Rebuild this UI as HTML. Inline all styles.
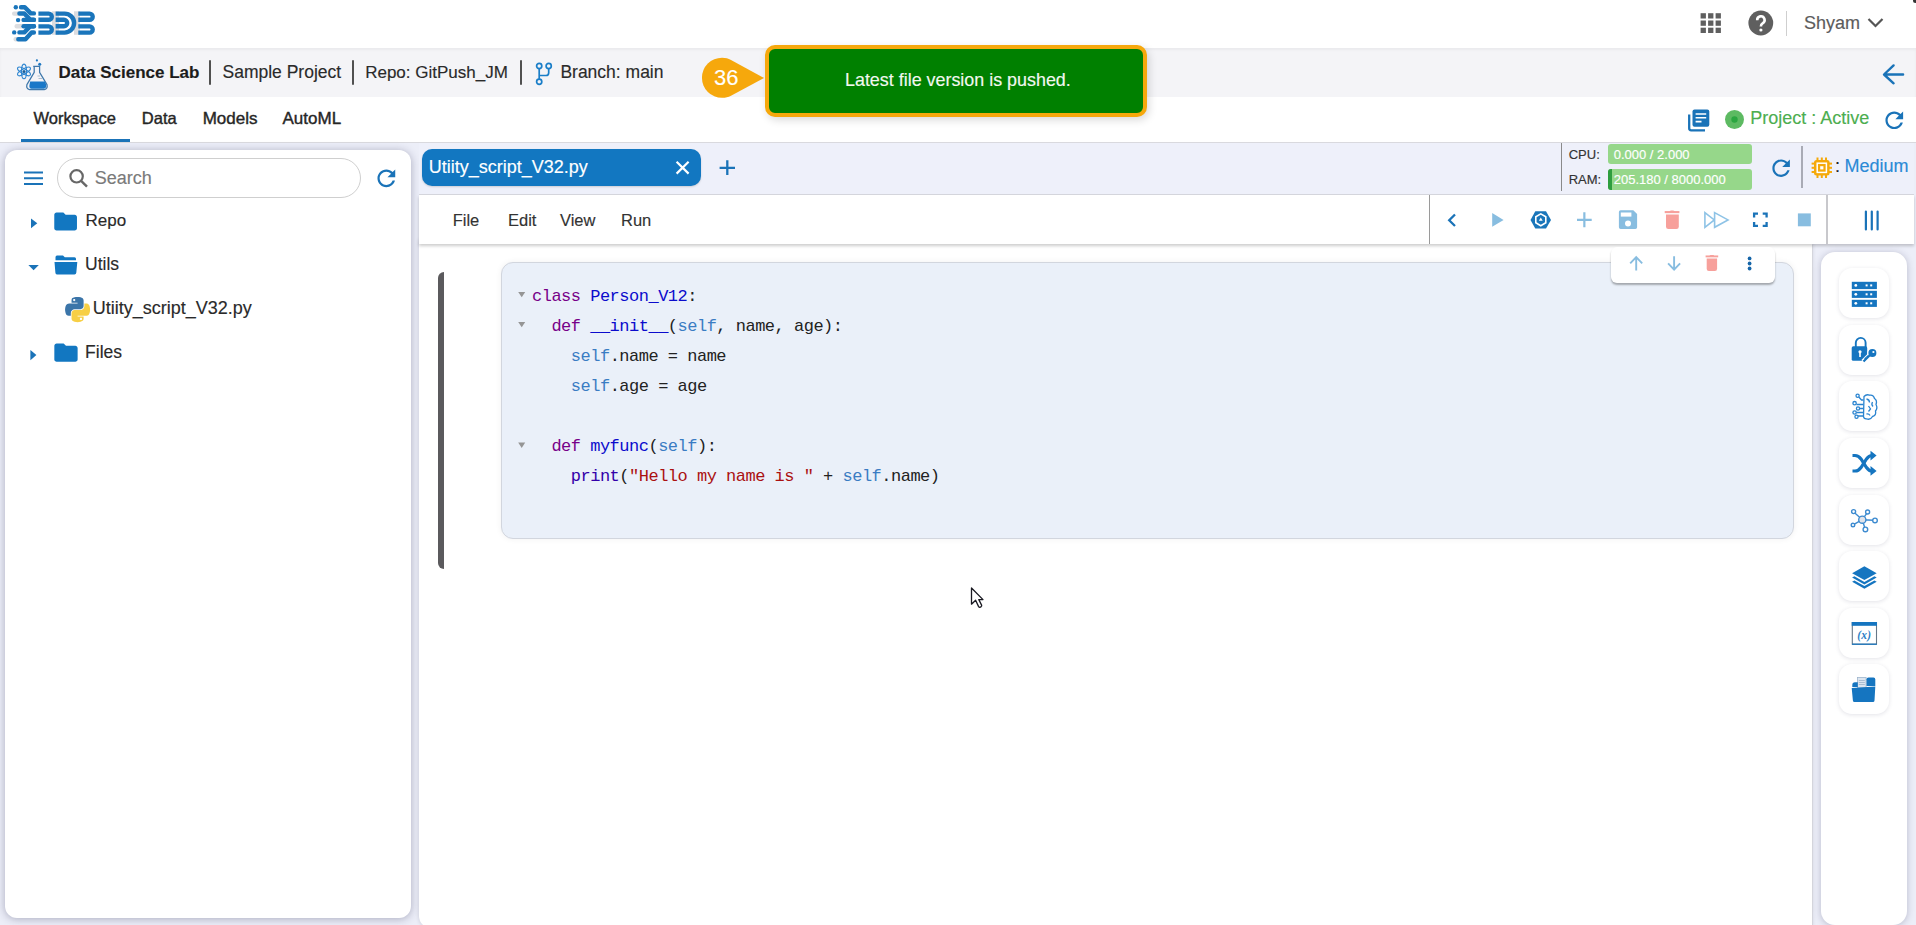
<!DOCTYPE html>
<html><head><meta charset="utf-8">
<style>
*{box-sizing:border-box;margin:0;padding:0}
html,body{width:1916px;height:925px;overflow:hidden}
body{position:relative;background:#eceef8;font-family:"Liberation Sans",sans-serif;color:#222}
.a{position:absolute}
.t{position:absolute;white-space:nowrap;-webkit-text-stroke:0.15px currentColor}
.tb{-webkit-text-stroke:0.4px currentColor}
svg{position:absolute;overflow:visible}
</style></head>
<body>
<!-- header -->
<div class="a" style="left:0;top:0;width:1916px;height:48px;background:#fff"></div>
<div class="a" style="left:0;top:48px;width:1916px;height:49px;background:#f4f4f7;box-shadow:inset 0 2px 3px rgba(0,0,0,0.045)"></div>
<div class="a" style="left:0;top:97px;width:1916px;height:45px;background:#fff"></div>
<div class="a" style="left:0;top:142px;width:1916px;height:1px;background:#d9d9de"></div>

<!-- left panel -->
<div class="a" style="left:5px;top:150px;width:406px;height:768px;background:#fff;border-radius:12px;box-shadow:0 1px 8px rgba(40,40,80,0.34)"></div>

<!-- editor strip -->
<div class="a" style="left:419px;top:143px;width:1495px;height:51px;background:#eef0fa"></div>
<div class="a" style="left:419px;top:194px;width:1495px;height:1px;background:#d6d7de"></div>
<!-- editor content -->
<div class="a" style="left:419px;top:240px;width:1393px;height:688px;background:#fff;border-radius:0 0 0 12px;box-shadow:0 0 4px rgba(0,0,40,0.16)"></div>
<div class="a" style="left:1812px;top:245px;width:1px;height:680px;background:#d4d5dc"></div>
<div class="a" style="left:419px;top:195px;width:1495px;height:49px;background:#fff;box-shadow:0 2px 3px rgba(0,0,0,0.2)"></div>
<!-- right panel -->
<div class="a" style="left:1821px;top:252px;width:86px;height:673px;background:#fff;border-radius:14px;box-shadow:0 1px 7px rgba(50,50,90,0.28)"></div>


<!-- header texts -->
<div class="t" style="left:1804px;top:13.7px;font-size:18px;line-height:18px;color:#5c5c5c">Shyam</div>
<div class="t" style="left:58.6px;top:63.8px;font-size:17px;line-height:17px;font-weight:bold;color:#1c1c1c">Data Science Lab</div>
<div class="a" style="left:209px;top:60px;width:2px;height:25px;background:#505050;border-radius:1px"></div>
<div class="t" style="left:222.5px;top:64.4px;font-size:17.5px;line-height:17.5px;color:#2a2a2a">Sample Project</div>
<div class="a" style="left:352px;top:60px;width:2px;height:25px;background:#505050;border-radius:1px"></div>
<div class="t" style="left:365.2px;top:63.8px;font-size:17px;line-height:17px;color:#2a2a2a">Repo: GitPush_JM</div>
<div class="a" style="left:520px;top:60px;width:2px;height:25px;background:#505050;border-radius:1px"></div>
<div class="t" style="left:560.4px;top:64.4px;font-size:17.5px;line-height:17.5px;color:#2a2a2a">Branch: main</div>
<!-- tabs -->
<div class="t tb" style="left:33.6px;top:110px;font-size:16.5px;line-height:16.5px;color:#262626">Workspace</div>
<div class="t tb" style="left:141.8px;top:110px;font-size:16.5px;line-height:16.5px;color:#262626">Data</div>
<div class="t tb" style="left:202.7px;top:109.6px;font-size:17px;line-height:17px;color:#262626">Models</div>
<div class="t tb" style="left:282.5px;top:109.6px;font-size:17px;line-height:17px;color:#262626">AutoML</div>
<div class="a" style="left:21px;top:139px;width:109px;height:3px;background:#1a73b8"></div>
<div class="t" style="left:1750.2px;top:109.2px;font-size:18px;line-height:18px;color:#4cae4f">Project : Active</div>
<!-- left tree -->
<div class="a" style="left:57px;top:158px;width:304px;height:40px;border:1px solid #cfcfcf;border-radius:20px"></div>
<div class="t" style="left:94.7px;top:168.9px;font-size:18px;line-height:18px;color:#7a7a7a">Search</div>
<div class="t" style="left:85.5px;top:212.1px;font-size:17px;line-height:17px;color:#2a2a2a">Repo</div>
<div class="t" style="left:85.1px;top:256px;font-size:17.5px;line-height:17.5px;color:#2a2a2a">Utils</div>
<div class="t" style="left:92.8px;top:299.2px;font-size:18px;line-height:18px;color:#2a2a2a">Utiity_script_V32.py</div>
<div class="t" style="left:85.1px;top:343.5px;font-size:17.5px;line-height:17.5px;color:#2a2a2a">Files</div>
<!-- editor tab -->
<div class="a" style="left:422px;top:149px;width:279px;height:37px;background:#1277c1;border-radius:10px;box-shadow:0 1px 2px rgba(0,0,0,0.15)"></div>
<div class="t" style="left:428.7px;top:158.1px;font-size:18px;line-height:18px;color:#fff">Utiity_script_V32.py</div>
<!-- menu -->
<div class="t" style="left:452.7px;top:212.3px;font-size:16.5px;line-height:16.5px;color:#333">File</div>
<div class="t" style="left:508px;top:212.3px;font-size:16.5px;line-height:16.5px;color:#333">Edit</div>
<div class="t" style="left:560px;top:212.3px;font-size:16.5px;line-height:16.5px;color:#333">View</div>
<div class="t" style="left:621px;top:212.3px;font-size:16.5px;line-height:16.5px;color:#333">Run</div>
<div class="a" style="left:1429px;top:195px;width:1px;height:49px;background:#9a9a9a"></div>
<div class="a" style="left:1826px;top:195px;width:2px;height:49px;background:#c8c8cc"></div>
<!-- CPU RAM -->
<div class="a" style="left:1561px;top:143px;width:1px;height:48px;background:#8a8a8a"></div>
<div class="t" style="left:1568.7px;top:148px;font-size:13px;line-height:13px;color:#333">CPU:</div>
<div class="t" style="left:1568.7px;top:172.8px;font-size:13px;line-height:13px;color:#333">RAM:</div>
<div class="a" style="left:1608px;top:144px;width:144px;height:20px;background:#96d78a;border-radius:3px"></div>
<div class="a" style="left:1608px;top:169px;width:144px;height:21px;background:#96d78a;border-radius:3px;overflow:hidden"><div class="a" style="left:0;top:0;width:4px;height:21px;background:#2e9e3e"></div></div>
<div class="t" style="left:1613.7px;top:147.9px;font-size:13px;line-height:13px;color:#fff">0.000 / 2.000</div>
<div class="t" style="left:1613.7px;top:172.8px;font-size:13px;line-height:13px;color:#fff">205.180 / 8000.000</div>
<div class="a" style="left:1801px;top:146px;width:2px;height:42px;background:#a9abb5"></div>
<div class="t" style="left:1835px;top:157px;font-size:18px;line-height:18px;color:#222">:</div>
<div class="t" style="left:1844.5px;top:157px;font-size:18px;line-height:18px;color:#2a8ad6">Medium</div>
<!-- code cell -->
<div class="a" style="left:438px;top:272px;width:6px;height:297px;background:#5b5a5d;border-radius:6px 0 0 6px"></div>
<div class="a" style="left:501px;top:262px;width:1293px;height:277px;background:#eaf0f9;border:1px solid #d2d6de;border-radius:12px;box-shadow:0 0 6px rgba(0,0,0,0.06)"></div>
<pre class="a" style="left:532px;top:281.5px;font-family:'Liberation Mono',monospace;font-size:17px;letter-spacing:-0.5px;line-height:30.1px;color:#222"><span style="color:#708">class</span> <span style="color:#0b0bcc">Person_V12</span>:
  <span style="color:#708">def</span> <span style="color:#0b0bcc">__init__</span>(<span style="color:#3a7cc3">self</span>, name, age):
    <span style="color:#3a7cc3">self</span>.name = name
    <span style="color:#3a7cc3">self</span>.age = age

  <span style="color:#708">def</span> <span style="color:#0b0bcc">myfunc</span>(<span style="color:#3a7cc3">self</span>):
    <span style="color:#30a">print</span>(<span style="color:#a11">"Hello my name is "</span> + <span style="color:#3a7cc3">self</span>.name)</pre>
<!-- cell toolbar -->
<div class="a" style="left:1611px;top:247px;width:164px;height:36px;background:#fff;border-radius:6px;box-shadow:0 2px 2px rgba(0,0,0,0.3)"></div>

<!-- ICONS header -->
<svg style="left:0;top:0" width="100" height="48" viewBox="0 0 100 48">
 <g fill="#dcdde0">
  <rect x="12" y="11.4" width="8" height="4.4" rx="2"/><rect x="14.5" y="24" width="9" height="4.4" rx="2"/><rect x="13.5" y="37" width="6" height="4.4" rx="2"/>
  <rect x="52" y="11.3" width="7" height="23.5"/><rect x="74" y="11.3" width="6" height="23.5"/>
 </g>
 <g fill="none" stroke="#1a75bb" stroke-width="4.4" stroke-linecap="round" stroke-linejoin="round">
  <path d="M21,7.3 H24.8 L30.8,13.4 H33.9"/>
  <path d="M19.4,13.5 H24.3 L30.3,19.8 H33.9"/>
  <path d="M23.6,19.9 H33.9"/>
  <path d="M23.6,26.2 H33.9"/>
  <path d="M19.4,32.4 H24.3 L30.3,26.3 H33.9"/>
  <path d="M18.3,39.2 H25.5 L31.6,32.5 H33.9"/>
 </g>
 <g fill="#1a75bb"><circle cx="15.8" cy="7.3" r="2.2"/><circle cx="18.1" cy="20.1" r="2.2"/><circle cx="14.2" cy="32.4" r="2.2"/></g>
 <g fill="none" stroke="#1a75bb" stroke-width="4.4" stroke-linecap="butt">
  <path d="M38.4,13.6 H48.7 A3.1 3.1 0 0 1 48.7,19.8 H38.4"/>
  <path d="M38.4,26.4 H48.7 A3.1 3.1 0 0 1 48.7,32.6 H38.4"/>
  <path d="M55.6,13.6 H64.6 A9.5 9.5 0 0 1 64.6,32.6 H55.6"/>
  <path d="M55.6,19.8 H64 A3.2 3.2 0 0 1 64,26.2 H55.6"/>
  <path d="M78.3,13.6 H89.6 A3.1 3.1 0 0 1 89.6,19.8 H78.3"/>
  <path d="M78.3,26.4 H89.6 A3.1 3.1 0 0 1 89.6,32.6 H78.3"/>
 </g>
</svg>
<svg style="left:1700px;top:13px" width="22" height="21" viewBox="0 0 22 21"><g fill="#5f5f5f">
 <rect x="0.6" y="0.2" width="5.3" height="5.3"/><rect x="8.1" y="0.2" width="5.3" height="5.3"/><rect x="15.6" y="0.2" width="5.3" height="5.3"/>
 <rect x="0.6" y="7.5" width="5.3" height="5.3"/><rect x="8.1" y="7.5" width="5.3" height="5.3"/><rect x="15.6" y="7.5" width="5.3" height="5.3"/>
 <rect x="0.6" y="14.7" width="5.3" height="5.3"/><rect x="8.1" y="14.7" width="5.3" height="5.3"/><rect x="15.6" y="14.7" width="5.3" height="5.3"/>
</g></svg>
<svg style="left:1748px;top:10px" width="26" height="26" viewBox="0 0 26 26">
 <circle cx="12.8" cy="13" r="12.4" fill="#5f5f5f"/>
 <path d="M9.2,10.2 A3.7 3.7 0 1 1 14.6,13.3 C13.4,14 12.9,14.6 12.9,16.4" fill="none" stroke="#fff" stroke-width="2.6" stroke-linecap="butt"/>
 <circle cx="12.9" cy="20" r="1.6" fill="#fff"/>
</svg>
<div class="a" style="left:1786px;top:11px;width:1px;height:25px;background:#cfcfcf"></div>
<svg style="left:1866px;top:16px" width="20" height="14" viewBox="0 0 20 14"><path d="M2.5,3 L9.5,10 L16.5,3" fill="none" stroke="#555" stroke-width="2.2"/></svg>
<!-- DS lab icon -->
<svg style="left:12px;top:55px" width="40" height="40" viewBox="0 0 40 40">
 <g fill="none" stroke="#2f86d0" stroke-width="1.15">
  <ellipse cx="12" cy="16.4" rx="2.5" ry="7.3"/>
  <ellipse cx="12" cy="16.4" rx="2.5" ry="7.3" transform="rotate(60 12 16.4)"/>
  <ellipse cx="12" cy="16.4" rx="2.5" ry="7.3" transform="rotate(-60 12 16.4)"/>
 </g>
 <circle cx="12" cy="16.4" r="1.5" fill="#1a5f99"/>
 <path d="M21.2,11.3 H28.2 M22.2,11.3 V17.4 L14.9,29.6 Q14,33.9 17.6,34.6 H32.3 Q35.9,33.9 35,29.6 L27.6,17.4 V11.3" fill="none" stroke="#3f78ab" stroke-width="1.25" stroke-linejoin="round"/>
 <path d="M18.2,26.6 H33 L34.2,29.8 Q34.7,33.3 31.8,33.7 H19.5 Q17,33.4 17.4,30.2 Z" fill="#1a78c8"/>
 <path d="M25.5,21 H28 M26.5,23.5 H30" stroke="#9bb0c4" stroke-width="0.8"/>
 <circle cx="24.9" cy="5.4" r="1.1" fill="#1e78c2"/><circle cx="27.7" cy="9.3" r="1.5" fill="#1e78c2"/>
</svg>
<!-- branch -->
<svg style="left:528px;top:55px" width="32" height="40" viewBox="0 0 32 40"><g fill="none" stroke="#1a7ec8" stroke-width="1.7">
 <circle cx="11.2" cy="11" r="2.6"/><circle cx="20.7" cy="11" r="2.6"/><circle cx="11.2" cy="26.8" r="2.6"/>
 <path d="M11.2,13.6 V24.2 M20.7,13.6 V17.7 Q20.7,20.5 18,20.5 H11.2"/>
</g></svg>
<!-- back arrow -->
<svg style="left:1870px;top:55px" width="46" height="40" viewBox="0 0 46 40"><path d="M23.6,10.4 L14,19.5 L23.6,28.3 M14.3,19.5 H33.1" fill="none" stroke="#1a73b8" stroke-width="2.4" stroke-linecap="round" stroke-linejoin="round"/></svg>
<!-- badge 36 -->
<svg style="left:700px;top:55px" width="70" height="46" viewBox="0 0 70 46">
 <path d="M22,2.7 C26,2.7 28,3.5 31,5 L64,22.9 L31,40.8 C28,42.3 26,42.8 22,42.8 A20 20 0 0 1 22,2.7 Z" fill="#f6a80c"/>
</svg>
<div class="t" style="left:714px;top:67.2px;font-size:22px;line-height:22px;color:#fff">36</div>
<!-- ICONS rest -->
<svg style="left:1880.56px;top:107.27px" width="26.55" height="26.55" viewBox="0 0 24 24"><path d="M17.65 6.35C16.2 4.9 14.21 4 12 4c-4.42 0-7.99 3.58-7.99 8s3.57 8 7.99 8c3.73 0 6.84-2.55 7.73-6h-2.08c-.82 2.33-3.04 4-5.65 4-3.31 0-6-2.69-6-6s2.69-6 6-6c1.66 0 3.14.69 4.22 1.78L13 11h7V4l-2.35 2.35z" fill="#1a73b8"/></svg>
<svg style="left:372.84px;top:165.45px" width="26.70" height="26.70" viewBox="0 0 24 24"><path d="M17.65 6.35C16.2 4.9 14.21 4 12 4c-4.42 0-7.99 3.58-7.99 8s3.57 8 7.99 8c3.73 0 6.84-2.55 7.73-6h-2.08c-.82 2.33-3.04 4-5.65 4-3.31 0-6-2.69-6-6s2.69-6 6-6c1.66 0 3.14.69 4.22 1.78L13 11h7V4l-2.35 2.35z" fill="#1a73b8"/></svg>
<svg style="left:1767.81px;top:154.72px" width="26.25" height="26.25" viewBox="0 0 24 24"><path d="M17.65 6.35C16.2 4.9 14.21 4 12 4c-4.42 0-7.99 3.58-7.99 8s3.57 8 7.99 8c3.73 0 6.84-2.55 7.73-6h-2.08c-.82 2.33-3.04 4-5.65 4-3.31 0-6-2.69-6-6s2.69-6 6-6c1.66 0 3.14.69 4.22 1.78L13 11h7V4l-2.35 2.35z" fill="#1a73b8"/></svg>
<svg style="left:1686px;top:108px" width="26" height="26" viewBox="0 0 26 26">
 <path d="M3.2,6.5 V20.3 Q3.2,22.3 5.2,22.3 H19" fill="none" stroke="#1a73b8" stroke-width="2.3"/>
 <rect x="6.5" y="1.6" width="16.8" height="17.2" rx="2" fill="#1a73b8"/>
 <g stroke="#fff" stroke-width="1.6"><path d="M9.6,6 H20.2 M9.6,9.8 H20.2 M9.6,13.6 H15.5"/></g>
</svg>
<svg style="left:1724px;top:109px" width="22" height="22" viewBox="0 0 22 22"><circle cx="10.5" cy="10.5" r="9.5" fill="#5dba62"/><circle cx="10.5" cy="10.5" r="3.2" fill="#2ba640"/></svg>
<svg style="left:24px;top:171px" width="20" height="16" viewBox="0 0 20 16"><g stroke="#1a73b8" stroke-width="2"><path d="M0,1.5 H19 M0,7.3 H19 M0,13.1 H19"/></g></svg>
<svg style="left:68px;top:168px" width="22" height="22" viewBox="0 0 22 22"><circle cx="8.6" cy="8.3" r="6.2" fill="none" stroke="#676767" stroke-width="2.2"/><path d="M13.1,12.8 L19,18.6" stroke="#676767" stroke-width="2.4"/></svg>
<svg style="left:0;top:0" width="420" height="380" viewBox="0 0 420 380"><g fill="#1a73b8">
 <path d="M31,218.4 L37.3,223.3 L31,228.2 Z"/>
 <path d="M28.4,265 L38.8,265 L33.6,270.2 Z"/>
 <path d="M30.4,349.9 L36.4,355 L30.4,360.2 Z"/>
</g></svg>
<svg style="left:52.33px;top:207.67px" width="27.24" height="27.15" viewBox="0 0 24 24" preserveAspectRatio="none"><path d="M10 4H4c-1.1 0-1.99.9-1.99 2L2 18c0 1.1.9 2 2 2h16c1.1 0 2-.9 2-2V8c0-1.1-.9-2-2-2h-8l-2-2z" fill="#1277c1"/></svg>
<svg style="left:52.07px;top:339.45px" width="27.96" height="27.30" viewBox="0 0 24 24" preserveAspectRatio="none"><path d="M10 4H4c-1.1 0-1.99.9-1.99 2L2 18c0 1.1.9 2 2 2h16c1.1 0 2-.9 2-2V8c0-1.1-.9-2-2-2h-8l-2-2z" fill="#1277c1"/></svg>
<svg style="left:54px;top:255px" width="24" height="20" viewBox="0 0 24 20">
 <path d="M1.5,2.2 Q1.5,0.6 3,0.6 H9 L10.8,2.3 H20.5 Q22,2.3 22,3.8 V5.2 H1.5 Z" fill="#1277c1"/>
 <path d="M0.5,7 H23.3 L22.3,17.8 Q22.1,19.5 20.5,19.5 H3 Q1.5,19.5 1.4,17.8 Z" fill="#1277c1"/>
</svg>
<svg style="left:65px;top:296.5px" width="25" height="25" viewBox="0 0 110 110">
 <path d="M54.9,0.3 C50.3,0.3 45.9,0.7 42.1,1.4 C30.8,3.4 28.8,7.5 28.8,15.2 V25.3 H55.3 V28.7 H28.8 H18.9 C11.1,28.7 4.4,33.3 2.3,42.1 C-0.2,52.1 -0.3,58.4 2.3,68.8 C4.2,76.6 8.6,82.1 16.3,82.1 H25.6 V69.9 C25.6,61.2 33.1,53.4 42.1,53.4 H68.6 C76,53.4 81.9,47.3 81.9,39.9 V15.2 C81.9,8.1 75.9,2.7 68.6,1.4 C64,0.7 59.3,0.3 54.9,0.3 Z M40.5,8.5 C43.3,8.5 45.5,10.8 45.5,13.6 C45.5,16.4 43.3,18.6 40.5,18.6 C37.8,18.6 35.5,16.4 35.5,13.6 C35.5,10.8 37.8,8.5 40.5,8.5 Z" fill="#3b75a9"/>
 <path d="M85.2,28.7 V40.6 C85.2,49.8 77.4,57.6 68.6,57.6 H42.1 C34.8,57.6 28.8,63.8 28.8,71.1 V95.9 C28.8,103 34.9,107.1 42.1,109.2 C50.6,111.7 58.8,112.2 68.6,109.2 C75.2,107.3 81.9,103.5 81.9,95.9 V86 H55.3 V82.7 H81.9 H95.2 C102.9,82.7 105.8,77.3 108.5,69.2 C111.2,60.9 111.1,52.9 108.5,42.3 C106.6,34.6 102.9,28.7 95.2,28.7 Z M70.3,91.6 C73.1,91.6 75.3,93.8 75.3,96.6 C75.3,99.4 73.1,101.7 70.3,101.7 C67.6,101.7 65.3,99.4 65.3,96.6 C65.3,93.8 67.6,91.6 70.3,91.6 Z" fill="#f7cf45"/>
</svg>
<svg style="left:674px;top:159px" width="18" height="18" viewBox="0 0 18 18"><path d="M2.6,2.8 L14.6,14.6 M14.6,2.8 L2.6,14.6" stroke="#fff" stroke-width="2.2"/></svg>
<svg style="left:718px;top:159px" width="19" height="18" viewBox="0 0 19 18"><path d="M1.6,8.8 H17 M9.3,1.2 V16.1" stroke="#1a73b8" stroke-width="2.3"/></svg>
<svg style="left:1440px;top:205px" width="380" height="30" viewBox="1440 205 380 30">
 <path d="M1455,214.5 L1449.2,220.3 L1455,226" fill="none" stroke="#1a73b8" stroke-width="2.3"/>
 <path d="M1492.2,213 L1503.6,219.9 L1492.2,226.8 Z" fill="#88bde0"/>
 <path d="M1535.3,211.3 H1546 L1551,219.9 L1546,228.5 H1535.3 L1530.5,219.9 Z" fill="#1a76ba"/>
 <path d="M1540.8,212.9 L1546.6,216.3 V223.3 L1540.8,226.7 L1535,223.3 V216.3 Z" fill="#fff"/>
 <path d="M1540.8,214.8 L1545,217.3 V222.3 L1540.8,224.8 L1536.6,222.3 V217.3 Z" fill="#1a76ba"/>
 <path d="M1540.8,217.4 L1542.7,220.8 H1538.9 Z" fill="#fff"/>
 <path d="M1577,219.8 H1591.7 M1584.35,212.2 V227.2" stroke="#88bde0" stroke-width="2.2"/>
 <path d="M1620.3,210.3 H1633.3 L1637.1,214.1 V227.3 Q1637.1,229.1 1635.3,229.1 H1620.7 Q1618.9,229.1 1618.9,227.3 V212.1 Q1618.9,210.3 1620.7,210.3 Z" fill="#88bde0"/>
 <rect x="1620.8" y="212.5" width="10.6" height="4.1" fill="#fff"/>
 <circle cx="1628" cy="223.6" r="3" fill="#fff"/>
 <path d="M1664.7,212.1 H1679.4" stroke="#f7a09b" stroke-width="2.1"/>
 <path d="M1669.3,212 Q1669.3,210.4 1671,210.4 H1673.2 Q1674.8,210.4 1674.8,212 Z" fill="#f7a09b"/>
 <path d="M1666,214.4 H1678.8 V226.7 Q1678.8,229.1 1676.4,229.1 H1668.4 Q1666,229.1 1666,226.7 Z" fill="#f7a09b"/>
 <path d="M1704.9,212.6 L1714.3,219.9 L1704.9,227.3 Z M1714.6,212.6 L1728,219.9 L1714.6,227.3 Z" fill="none" stroke="#8ec3e6" stroke-width="1.6" stroke-linejoin="miter"/>
 <path d="M1754.1,217.4 V213.6 H1758 M1762.7,213.6 H1766.6 V217.4 M1766.6,221.9 V225.8 H1762.7 M1758,225.8 H1754.1 V221.9" fill="none" stroke="#1a73b8" stroke-width="2.3"/>
 <rect x="1797.9" y="213.4" width="12.9" height="12.9" fill="#88bde0"/>
</svg>
<svg style="left:1860px;top:208px" width="24" height="26" viewBox="0 0 24 26"><path d="M5.9,3.5 V21.5 M11.8,3.5 V21.5 M17.6,3.5 V21.5" stroke="#1a73b8" stroke-width="2.2" stroke-linecap="round"/></svg>
<svg style="left:1810px;top:156px" width="24" height="24" viewBox="0 0 24 24">
 <g fill="#f5a90a">
  <rect x="4" y="4" width="15.6" height="15.6" rx="2.5"/>
  <rect x="6.5" y="1.5" width="2" height="3"/><rect x="10.8" y="1.5" width="2" height="3"/><rect x="15" y="1.5" width="2" height="3"/>
  <rect x="6.5" y="19" width="2" height="3"/><rect x="10.8" y="19" width="2" height="3"/><rect x="15" y="19" width="2" height="3"/>
  <rect x="1.6" y="6.6" width="3" height="2"/><rect x="1.6" y="10.8" width="3" height="2"/><rect x="1.6" y="15" width="3" height="2"/>
  <rect x="19" y="6.6" width="3" height="2"/><rect x="19" y="10.8" width="3" height="2"/><rect x="19" y="15" width="3" height="2"/>
 </g>
 <rect x="7.2" y="7.2" width="9.2" height="9.2" fill="none" stroke="#fff" stroke-width="1.5"/>
 <rect x="10.2" y="10.2" width="3.2" height="3.2" fill="#fff"/>
</svg>
<svg style="left:1620px;top:250px" width="140" height="28" viewBox="1620 250 140 28">
 <path d="M1636.2,270.6 V257.5 M1630.2,263.4 L1636.2,257.2 L1642.2,263.4" fill="none" stroke="#88bde0" stroke-width="1.9"/>
 <path d="M1674.1,256.2 V269.3 M1668.1,263.4 L1674.1,269.6 L1680.1,263.4" fill="none" stroke="#88bde0" stroke-width="1.9"/>
 <path d="M1705.6,256.4 H1718.2" stroke="#f7a09b" stroke-width="1.9"/>
 <path d="M1709.5,256.4 Q1709.5,255 1711,255 H1712.8 Q1714.3,255 1714.3,256.4 Z" fill="#f7a09b"/>
 <path d="M1706.7,258.5 H1717.1 V268.8 Q1717.1,271 1714.9,271 H1708.9 Q1706.7,271 1706.7,268.8 Z" fill="#f7a09b"/>
 <circle cx="1749.6" cy="258.4" r="1.9" fill="#1565a8"/><circle cx="1749.6" cy="263.5" r="1.9" fill="#1565a8"/><circle cx="1749.6" cy="268.5" r="1.9" fill="#1565a8"/>
</svg>
<svg style="left:510px;top:280px" width="30" height="180" viewBox="510 280 30 180"><g fill="#959595">
 <path d="M518.2,292 H525.2 L521.7,297.3 Z"/>
 <path d="M518.2,322 H525.2 L521.7,327.3 Z"/>
 <path d="M518.2,442.6 H525.2 L521.7,447.9 Z"/>
</g></svg>
<svg style="left:965px;top:582px" width="26" height="30" viewBox="965 582 26 30"><path d="M971.5,588 V604.2 L975.6,600.3 L978.6,606.6 Q979.3,607.6 980.3,607.1 L981.2,606.6 Q982,606 981.6,605.1 L978.8,599.6 L983,599.6 Z" fill="#fff" stroke="#1a1a22" stroke-width="1.3" stroke-linejoin="round"/></svg>
<!-- right panel buttons -->
<div class="a" style="left:1838.5px;top:268px;width:50px;height:50px;background:#fff;border-radius:13px;box-shadow:0 1px 4px rgba(40,40,80,0.13)"></div>
<div class="a" style="left:1838.5px;top:324.6px;width:50px;height:50px;background:#fff;border-radius:13px;box-shadow:0 1px 4px rgba(40,40,80,0.13)"></div>
<div class="a" style="left:1838.5px;top:381.3px;width:50px;height:50px;background:#fff;border-radius:13px;box-shadow:0 1px 4px rgba(40,40,80,0.13)"></div>
<div class="a" style="left:1838.5px;top:438px;width:50px;height:50px;background:#fff;border-radius:13px;box-shadow:0 1px 4px rgba(40,40,80,0.13)"></div>
<div class="a" style="left:1838.5px;top:494.6px;width:50px;height:50px;background:#fff;border-radius:13px;box-shadow:0 1px 4px rgba(40,40,80,0.13)"></div>
<div class="a" style="left:1838.5px;top:551.2px;width:50px;height:50px;background:#fff;border-radius:13px;box-shadow:0 1px 4px rgba(40,40,80,0.13)"></div>
<div class="a" style="left:1838.5px;top:607.8px;width:50px;height:50px;background:#fff;border-radius:13px;box-shadow:0 1px 4px rgba(40,40,80,0.13)"></div>
<div class="a" style="left:1838.5px;top:664.4px;width:50px;height:50px;background:#fff;border-radius:13px;box-shadow:0 1px 4px rgba(40,40,80,0.13)"></div>
<svg style="left:1838px;top:260px" width="60" height="460" viewBox="1838 260 60 460">
 <g fill="#1575c0">
  <rect x="1851.8" y="281.8" width="25.1" height="7.3"/><rect x="1851.8" y="290.8" width="25.1" height="7.1"/><rect x="1851.8" y="299.8" width="25.1" height="7.1"/>
 </g>
 <g fill="#fff">
  <circle cx="1855.8" cy="285.4" r="1.4"/><circle cx="1855.8" cy="294.3" r="1.4"/><circle cx="1855.8" cy="303.3" r="1.4"/>
  <rect x="1865.6" y="284.4" width="2" height="2"/><rect x="1870.2" y="284.4" width="2" height="2"/>
  <rect x="1865.6" y="293.3" width="2" height="2"/><rect x="1870.2" y="293.3" width="2" height="2"/>
  <rect x="1865.6" y="302.3" width="2" height="2"/><rect x="1870.2" y="302.3" width="2" height="2"/>
 </g>
 <!-- lock -->
 <path d="M1855.8,347.3 V342.8 A4.9 4.9 0 0 1 1865.6,342.8 V347.3" fill="none" stroke="#1575c0" stroke-width="1.9"/>
 <rect x="1851.7" y="346.3" width="15.5" height="14.5" rx="1.6" fill="#1575c0"/>
 <circle cx="1860" cy="351.8" r="1.6" fill="#fff"/><rect x="1859.2" y="351.8" width="1.6" height="5.2" fill="#fff"/>
 <path d="M1863.2,361.8 L1870,355" stroke="#fff" stroke-width="5"/>
 <circle cx="1872.4" cy="352.9" r="5.2" fill="#fff"/>
 <path d="M1863.5,361.5 L1870,355 M1864.9,357.8 L1866.6,359.5 M1866.8,356 L1868.3,357.5" stroke="#1575c0" stroke-width="2.2"/>
 <circle cx="1872.4" cy="352.9" r="4" fill="#1575c0"/>
 <circle cx="1873.4" cy="352" r="1.1" fill="#fff"/>
 <!-- brain -->
 <g fill="none" stroke="#2a84d0" stroke-width="1.3">
  <path d="M1864,396.5 Q1866.5,393.8 1869.5,395.2 Q1873.5,394.5 1874.5,398.5 Q1877.5,400.5 1876,404.5 Q1878,408 1875.5,411 Q1876.5,415.5 1872.5,416.5 Q1870.5,420.3 1866.5,418.8 Q1863.8,419 1863.5,416.5 Z"/>
  <path d="M1866.5,399 Q1869.5,399.5 1869.5,402.5 M1868.5,406 L1870.5,409 L1868.5,411.5 M1872.5,402 Q1871,404.5 1873,406.5 M1866.5,414 Q1869,413.5 1870,415.5"/>
  <path d="M1863.5,400 H1861.5 L1858.8,397 M1863.5,404.5 H1856.5 M1863.5,408.5 H1859.5 M1863.5,412.5 H1856.5 M1863.5,416 H1858"/>
  <circle cx="1857.6" cy="395.8" r="1.6"/><circle cx="1854.6" cy="403.2" r="1.7"/><circle cx="1858" cy="408.5" r="1.6"/><circle cx="1854.6" cy="412.5" r="1.7"/><circle cx="1856.5" cy="416.8" r="1.6"/>
 </g>
 <!-- shuffle -->
 <g fill="none" stroke="#1575c0" stroke-width="3.2">
  <path d="M1852.5,455.5 H1855 Q1858.5,455.5 1861,459 L1866.5,467.5 Q1869,471 1872,471 H1871"/>
  <path d="M1852.5,471 H1855 Q1858.5,471 1861,467.5 L1866.5,459 Q1869,455.5 1872,455.5 H1871"/>
 </g>
 <path d="M1870.5,450.8 L1876.6,455.5 L1870.5,460.5 Z M1870.5,466 L1876.6,471 L1870.5,475.8 Z" fill="#1575c0"/>
 <!-- network -->
 <g stroke="#3d8bd0" stroke-width="1.4" fill="none">
  <path d="M1862.3,519.7 L1854,512.3 M1862.3,519.7 L1867.3,512.6 M1862.3,519.7 L1873.6,520.3 M1862.3,519.7 L1865,528.5 M1862.3,519.7 L1853.5,524.6"/>
 </g>
 <g stroke="#3d8bd0" stroke-width="1.4" fill="#fff">
  <circle cx="1853.6" cy="511.6" r="2"/><circle cx="1867.6" cy="512" r="2"/><circle cx="1875" cy="520.4" r="2.3"/><circle cx="1865.4" cy="529.4" r="2.3"/><circle cx="1853" cy="525" r="1.8"/>
  <circle cx="1862.3" cy="519.7" r="3.6" fill="#dfe3ea"/>
 </g>
 <!-- layers -->
 <path d="M1864.4,566.3 L1876.7,573.2 L1864.4,580.1 L1852.1,573.2 Z" fill="#1575c0"/>
 <path d="M1852.1,577.6 L1854.4,576.3 L1864.4,581.9 L1874.4,576.3 L1876.7,577.6 L1864.4,584.5 Z" fill="#1575c0"/>
 <path d="M1852.1,581.8 L1854.4,580.5 L1864.4,586.1 L1874.4,580.5 L1876.7,581.8 L1864.4,588.7 Z" fill="#1575c0"/>
 <!-- window (x) -->
 <rect x="1852.3" y="622.6" width="24.2" height="21.6" fill="#fff" stroke="#667788" stroke-width="1.1"/><path d="M1852,644.2 H1876.8" stroke="#1575c0" stroke-width="1.2"/>
 <rect x="1851.7" y="622" width="25.3" height="3.8" fill="#1575c0"/>
 <text x="1864.3" y="638.6" text-anchor="middle" font-family="Liberation Serif" font-style="italic" font-size="11.5" font-weight="bold" letter-spacing="0.3" fill="#2c7fc6">(x)</text>
 <!-- folder with doc -->
 <rect x="1857.6" y="677.5" width="8.5" height="10.5" fill="#dde6f0" stroke="#9fb5cc" stroke-width="0.8"/>
 <path d="M1858.8,680.5 H1864.8 M1858.8,682.5 H1864.8 M1858.8,684.5 H1864.8" stroke="#8aa3bd" stroke-width="0.6"/>
 <path d="M1852.3,685 Q1852.3,682.3 1855,682.3 H1857.8 V687 H1852.3 Z" fill="#1575c0"/>
 <path d="M1866.5,679.2 Q1866.5,677.5 1868.5,677.5 H1873.5 Q1875.3,677.5 1875.3,679.5 V686 H1866.5 Z" fill="#1575c0"/>
 <path d="M1851.7,688 L1875.3,686.4 L1874.5,700.5 Q1874.4,702 1873,702 H1854.4 Q1853,702 1852.9,700.5 Z" fill="#1575c0"/>
</svg>
<div class="a" style="left:1913px;top:-2px;width:5px;height:5px;border-radius:50%;background:#333;filter:blur(0.6px)"></div>
<!-- toast -->
<div class="a" style="left:765px;top:45px;width:382px;height:72px;background:#008000;border:4px solid #f6a80c;border-radius:10px;box-shadow:2px 3px 8px rgba(0,0,0,0.15)"></div>
<div class="t" style="left:845px;top:72px;font-size:17.9px;line-height:17.9px;color:#f2f8f0">Latest file version is pushed.</div>
</body></html>
